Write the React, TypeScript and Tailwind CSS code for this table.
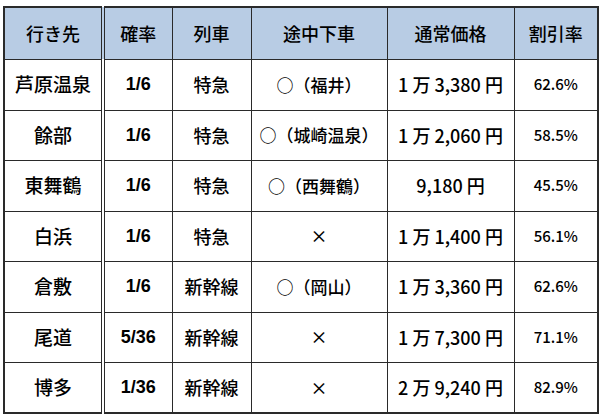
import React from 'react';

interface Row {
  dest: string;
  prob: string;
  train: string;
  stop: string;
  price: string;
  rate: string;
}

const rows: Row[] = [
  { dest: '芦原温泉', prob: '1/6', train: '特急', stop: '○（福井）', price: '1 万 3,380 円', rate: '62.6%' },
  { dest: '餘部', prob: '1/6', train: '特急', stop: '○（城崎温泉）', price: '1 万 2,060 円', rate: '58.5%' },
  { dest: '東舞鶴', prob: '1/6', train: '特急', stop: '○（西舞鶴）', price: '9,180 円', rate: '45.5%' },
  { dest: '白浜', prob: '1/6', train: '特急', stop: '×', price: '1 万 1,400 円', rate: '56.1%' },
  { dest: '倉敷', prob: '1/6', train: '新幹線', stop: '○（岡山）', price: '1 万 3,360 円', rate: '62.6%' },
  { dest: '尾道', prob: '5/36', train: '新幹線', stop: '×', price: '1 万 7,300 円', rate: '71.1%' },
  { dest: '博多', prob: '1/36', train: '新幹線', stop: '×', price: '2 万 9,240 円', rate: '82.9%' },
];

const headers = ['行き先', '確率', '列車', '途中下車', '通常価格', '割引率'];

export default function App() {
  return (
    <div className="w-[600px] h-[419px] bg-white pt-[6px] pl-[3px] font-['Noto_Sans_CJK_JP',sans-serif] text-black">
      <table className="table-fixed border-collapse w-[594px] border-2 border-[#2a2a2a]">
        <colgroup>
          <col className="w-[99px]" />
          <col className="w-[69px]" />
          <col className="w-[79px]" />
          <col className="w-[136px]" />
          <col className="w-[127px]" />
          <col className="w-[84px]" />
        </colgroup>
        <thead>
          <tr className="h-[52px] bg-[#b8cce4]">
            {headers.map((h, i) => (
              <th
                key={h}
                className={`border border-[#2a2a2a] text-center text-[18px] font-medium p-0 ${
                  i === 0 ? 'border-r-4 border-r-[#2a2a2a] border-double' : ''
                }`}
              >
                {h}
              </th>
            ))}
          </tr>
        </thead>
        <tbody>
          {rows.map((r, idx) => (
            <tr key={r.dest} className={idx % 2 === 0 ? 'h-[51px]' : 'h-[50px]'}>
              <td className="border border-r-4 border-double border-[#2a2a2a] text-center text-[19px] font-medium p-0">
                {r.dest}
              </td>
              <td className="border border-[#2a2a2a] text-center text-[18px] font-bold p-0 font-['Liberation_Sans',sans-serif]">
                {r.prob}
              </td>
              <td className="border border-[#2a2a2a] text-center text-[18px] font-medium p-0">{r.train}</td>
              <td className="border border-[#2a2a2a] text-center text-[17px] font-medium p-0 whitespace-nowrap">{r.stop}</td>
              <td className="border border-[#2a2a2a] text-center text-[18px] font-medium p-0 whitespace-nowrap">{r.price}</td>
              <td className="border border-[#2a2a2a] text-center text-[15px] font-medium p-0">{r.rate}</td>
            </tr>
          ))}
        </tbody>
      </table>
    </div>
  );
}
